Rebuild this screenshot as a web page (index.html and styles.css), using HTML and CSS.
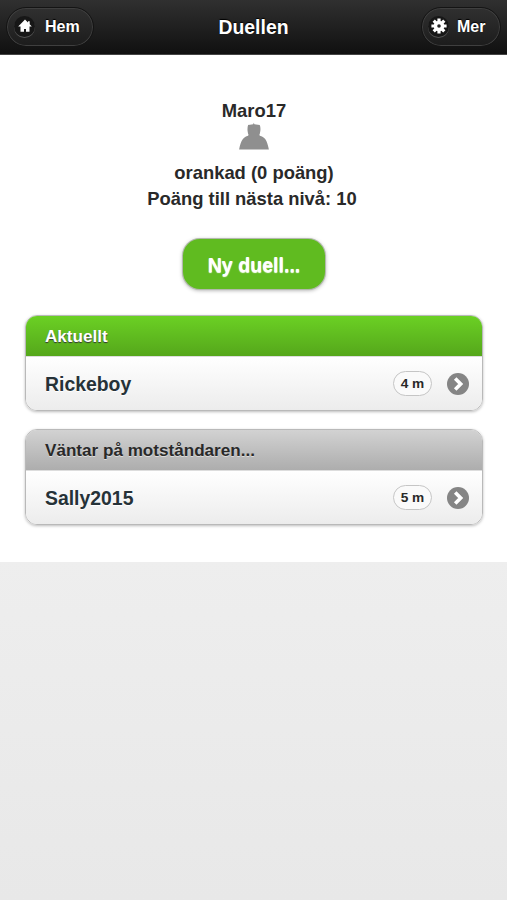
FILE: index.html
```html
<!DOCTYPE html>
<html lang="sv">
<head>
<meta charset="utf-8">
<title>Duellen</title>
<link rel="stylesheet" href="styles.css">
</head>
<body>
<header class="bar">
  <a class="bar-btn">
    <span class="disc"><svg width="16" height="16" viewBox="0 0 16 16"><path d="M8 1.500L1.200 8.500h2.300v5.200h3.500V11h2v2.700h3.500V8.500h2.300L12.700 6.300V3.200h-1.700v1.300z" fill="#fff"/></svg></span>
    <span>Hem</span>
  </a>
  <h1>Duellen</h1>
  <a class="bar-btn bar-btn-more">
    <span class="disc"><svg width="16" height="16" viewBox="-8 -8 16 16"><g stroke="#fff" stroke-width="3.200"><path d="M0-7.600V7.600M-7.600 0H7.600M-5.300-5.300L5.300 5.300M-5.300 5.300L5.300-5.300"/></g><circle r="5.300" fill="#fff"/><circle r="1.800" fill="#222"/></svg></span>
    <span>Mer</span>
  </a>
</header>
<main>
  <section class="profile">
    <div>Maro17</div>
    <svg class="avatar" width="32" height="30" viewBox="0 0 32 30"><path d="M10.300 3L15.200 2.300l.6-1.500.6 1.500 5.300.7c.9 1.800.9 4.600.5 6.700-.2 1.300-.4 2.300-.8 3.100l.4 1c2.200.7 4.200 1.700 5.400 3.300 1.800 2.400 2.700 6 3.700 10.500H1.100c.9-4.500 1.900-8.100 3.800-10.500 1.200-1.600 3-2.600 5.200-3.300l.4-1c-.4-.8-.6-1.800-.8-3.100-.4-2.100-.3-4.900.6-7.400z" fill="#8f8f8f"/></svg>
    <div>orankad (0 poäng)</div>
    <div class="next-level">Poäng till nästa nivå: 10</div>
  </section>
  <a class="new-duel">Ny duell...</a>
  <section class="list">
    <h2 class="active">Aktuellt</h2>
    <div class="row">
      <span class="name">Rickeboy</span>
      <span class="count">4 m</span>
      <svg class="arrow" width="24" height="24" viewBox="0 0 24 24"><circle cx="12" cy="12" r="11" fill="#858585"/><path d="M9.200 6.500L14.700 12l-5.500 5.500" fill="none" stroke="#fff" stroke-width="3.600"/></svg>
    </div>
  </section>
  <section class="list">
    <h2>Väntar på motståndaren...</h2>
    <div class="row">
      <span class="name">Sally2015</span>
      <span class="count">5 m</span>
      <svg class="arrow" width="24" height="24" viewBox="0 0 24 24"><circle cx="12" cy="12" r="11" fill="#858585"/><path d="M9.200 6.500L14.700 12l-5.500 5.500" fill="none" stroke="#fff" stroke-width="3.600"/></svg>
    </div>
  </section>
</main>
</body>
</html>
```
FILE: styles.css
```css
* { box-sizing: border-box; }
html { height: 100%; }
body {
  margin: 0;
  height: 900px;
  overflow: hidden;
  font-family: "Liberation Sans", Arial, sans-serif;
  font-weight: bold;
  color: #292929;
  background: linear-gradient(#eee 62%, #e8e8e8);
}
.bar {
  height: 55px;
  padding: 0 6px;
  display: grid;
  grid-template-columns: 1fr auto 1fr;
  align-items: start;
  color: #fff;
  background: linear-gradient(#303030, #101010);
  border-bottom: 1px solid #444;
}
.bar h1 {
  margin: 0;
  font-size: 19.4px;
  line-height: 54px;
  text-shadow: 0 -1px 1px #000;
}
.bar-btn {
  justify-self: start;
  width: 88px;
  height: 40px;
  margin-top: 7px;
  padding-left: 7px;
  display: flex;
  align-items: center;
  gap: 10px;
  font-size: 16px;
  line-height: 20px;
  border: 1px solid #141414;
  border-radius: 20px;
  background: linear-gradient(#303030, #1c1c1c);
  box-shadow: inset 0 0 0 1px #3f3f3f;
  text-shadow: 0 -1px 1px #000;
}
.bar-btn-more {
  justify-self: end;
  width: 80px;
  padding-left: 6px;
  gap: 8px;
}
.disc {
  width: 21px;
  height: 21px;
  margin-top: -2px;
  display: flex;
  align-items: center;
  justify-content: center;
  border-radius: 50%;
  background: #171717;
  box-shadow: 0 1px 0 #555;
}
main {
  height: 507px;
  padding: 43px 24px 0 25px;
  background: #fff;
}
.profile {
  height: 141px;
  display: flex;
  flex-direction: column;
  align-items: center;
  font-size: 18.4px;
  line-height: 26px;
}
.avatar { margin: -2px 0 8px; }
.next-level { margin-right: 4px; }
.new-duel {
  width: 142px;
  height: 50px;
  margin: 0 auto 26px;
  display: block;
  text-align: center;
  font-size: 19.6px;
  line-height: 53px;
  color: #fff;
  background: #60bb20;
  border-radius: 17px;
  box-shadow: 0 0 0 1px #b2b9ac, 0 1px 4px #999;
  text-shadow: 0 1px 1px #fff;
}
.list {
  height: 96px;
  margin-bottom: 18px;
  overflow: hidden;
  border: 1px solid #b9b9b9;
  border-radius: 12px;
  box-shadow: 0 1px 3px #bbb;
}
.list h2 {
  height: 40px;
  margin: 0;
  padding-left: 19px;
  font-size: 17.1px;
  line-height: 41px;
  background: linear-gradient(#d2d2d2, #adadad);
  text-shadow: 0 1px 0 #ddd;
}
.list .active {
  color: #fff;
  background: linear-gradient(#6bd024, #55a71b);
  text-shadow: 0 1px 1px #333;
}
.row {
  height: 54px;
  padding: 0 12px 0 19px;
  display: flex;
  align-items: center;
  border-top: 1px solid #ddd;
  background: linear-gradient(#fff, #ececec);
}
.name {
  flex: 1;
  padding-top: 1px;
  font-size: 19.4px;
  color: #263238;
  text-shadow: 0 1px 0 #fff;
}
.count {
  width: 39px;
  height: 25px;
  margin-right: 14px;
  text-align: center;
  font-size: 13.7px;
  line-height: 23px;
  border: 1px solid #c5c5c5;
  border-radius: 13px;
  background: #fafafa;
}
```
